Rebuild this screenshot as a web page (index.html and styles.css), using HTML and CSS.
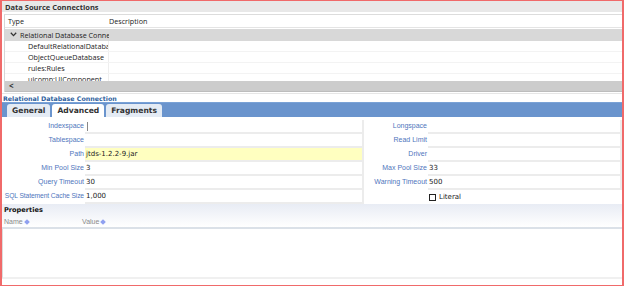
FILE: index.html
```html
<!DOCTYPE html>
<html>
<head>
<meta charset="utf-8">
<link rel="stylesheet" href="styles.css">
</head>
<body>
<div class="frame">
  <div class="dsc-title">Data Source Connections</div>
  <div class="tree">
    <div class="tree-viewport">
      <div class="tree-row tree-head"><span class="c-type">Type</span><span class="c-desc">Description</span></div>
      <div class="tree-row tree-group"><span class="c-type"><svg class="chev" width="7" height="5" viewBox="0 0 7 5"><path d="M0.8 0.8 L3.5 3.6 L6.2 0.8" fill="none" stroke="#333" stroke-width="1.3"/></svg>Relational Database Conne</span><span class="c-desc"></span></div>
      <div class="tree-row"><span class="c-type child">DefaultRelationalDataba</span><span class="c-desc"></span></div>
      <div class="tree-row"><span class="c-type child">ObjectQueueDatabase</span><span class="c-desc"></span></div>
      <div class="tree-row"><span class="c-type child">rules:Rules</span><span class="c-desc"></span></div>
      <div class="tree-row cut"><span class="c-type child">uicomp:UIComponent</span><span class="c-desc"></span></div>
    </div>
    <div class="hscroll"><span class="arrow">&lt;</span></div>
  </div>
  <div class="section-title">Relational Database Connection</div>
  <div class="tabbar">
    <div class="tab">General</div>
    <div class="tab active">Advanced</div>
    <div class="tab">Fragments</div>
  </div>
  <div class="form">
    <label class="lbl">Indexspace</label><div class="inp caret"></div>
    <label class="lbl">Longspace</label><div class="inp"></div>
    <label class="lbl">Tablespace</label><div class="inp"></div>
    <label class="lbl">Read Limit</label><div class="inp"></div>
    <label class="lbl">Path</label><div class="inp yellow">jtds-1.2.2-9.jar</div>
    <label class="lbl">Driver</label><div class="inp"></div>
    <label class="lbl">Min Pool Size</label><div class="inp">3</div>
    <label class="lbl">Max Pool Size</label><div class="inp">33</div>
    <label class="lbl">Query Timeout</label><div class="inp">30</div>
    <label class="lbl">Warning Timeout</label><div class="inp">500</div>
    <label class="lbl sql">SQL Statement Cache Size</label><div class="inp">1,000</div>
    <label class="lbl"></label><div class="inp chk"><span class="box"></span>Literal</div>
  </div>
  <div class="props">
    <div class="props-head">
      <div class="props-title">Properties</div>
      <div class="props-cols">
        <span class="pcol pname">Name <span class="sort"></span></span>
        <span class="pcol">Value <span class="sort"></span></span>
      </div>
    </div>
    <div class="props-body"></div>
  </div>
</div>
</body>
</html>
```
FILE: styles.css
```css
* { box-sizing: border-box; }
html, body { margin: 0; padding: 0; background: #fff; }
.frame {
  width: 624px;
  height: 286px;
  border: 1px solid #f06a6a;
  border-left-width: 2px;
  border-right-width: 2px;
  display: flex;
  flex-direction: column;
  overflow: hidden;
  font-family: "Open Sans", "Noto Sans", sans-serif;
  color: #222;
}
.dsc-title {
  height: 12px;
  background: #e8e8e8;
  font-weight: 700;
  font-size: 7.5px;
  line-height: 12px;
  padding-left: 3px;
  color: #333;
  border-bottom: 1px solid #fff;
  flex: none;
}
.tree {
  margin-top: 1px;
  border-top: 1px solid #dcdcdc;
  margin-left: 2px;
  border-left: 1px solid #d6d6d6;
  flex: none;
}
.tree-viewport { height: 66px; overflow: hidden; }
.tree-row {
  display: flex;
  height: 11px;
  font-size: 7.2px;
  line-height: 11px;
  border-bottom: 1px solid #f3f3f3;
}
.tree-head { height: 13px; line-height: 13px; border-bottom: 1px solid #e4e4e4; }
.tree-group { height: 12px; line-height: 12px; background: #d8d8d8; border-bottom: none; margin-top: 1px; }
.c-type { width: 104px; padding-left: 3px; white-space: nowrap; overflow: hidden; border-right: 1px solid #eee; flex: none; }
.tree-head .c-type, .tree-group .c-type { border-right: none; }
.c-desc { flex: 1; padding-left: 0; }
.child { padding-left: 23px; }
.chev { margin: 0 3px 0 2px; vertical-align: 1px; }
.hscroll {
  height: 11px;
  background: #cccccc;
  border-bottom: 1px solid #bdbdbd;
  font-size: 8px;
  line-height: 10px;
  padding-left: 4px;
  font-weight: 700;
  color: #333;
}
.section-title {
  margin-top: 1px;
  border-top: 1px solid #e6e6e6;
  height: 9px;
  font-family: "DejaVu Sans", sans-serif;
  font-size: 6.3px;
  font-weight: 700;
  color: #2f5f9e;
  line-height: 9px;
  padding-left: 1px;
  flex: none;
}
.tabbar {
  height: 15px;
  background: #6a94cd;
  display: flex;
  align-items: flex-end;
  gap: 2px;
  padding-left: 5px;
  border-top: 1px solid #7aa2d6;
  flex: none;
}
.tab {
  height: 13px;
  padding: 0 5px;
  background: #e4ebf4;
  border-radius: 3px 3px 0 0;
  font-family: "DejaVu Sans", sans-serif;
  font-size: 7.6px;
  font-weight: 700;
  line-height: 13px;
  color: #333;
}
.tab.active { background: #fff; }
.form {
  display: grid;
  grid-template-columns: 82px 279px 62px 1fr;
  column-gap: 1px;
  grid-auto-rows: 14px;
  padding-top: 3px;
  background: #fff;
  flex: none;
  font-family: "Liberation Sans", "DejaVu Sans", sans-serif;
  font-size: 7px;
}
.lbl {
  text-align: right;
  color: #4f76bd;
  line-height: 12px;
  white-space: nowrap;
}
.lbl.sql { font-size: 6.7px; letter-spacing: -0.1px; }
.inp {
  background: #fff;
  border-bottom: 2px solid #ececec;
  border-right: 2px solid #ececec;
  line-height: 12px;
  padding-left: 1px;
  color: #222;
  font-family: "DejaVu Sans", sans-serif;
  font-size: 7px;
}
.inp.caret { background: linear-gradient(#888, #888) 2px 2px / 1px 9px no-repeat #fff; }
.inp.yellow { background: #ffffc0; }
.inp.chk { display: flex; align-items: center; gap: 3px; border: none; }
.box { width: 7px; height: 7px; border: 1.5px solid #222; background: #fff; }
.props {
  flex: 1;
  display: flex;
  flex-direction: column;
  margin-top: 0;
}
.props-head {
  height: 25px;
  background: linear-gradient(#e8ecf4, #fff);
  border-bottom: 2px solid #dbe1e8;
  padding-top: 1px;
}
.props-title {
  font-family: "DejaVu Sans", sans-serif;
  font-size: 6.6px;
  font-weight: 700;
  color: #111;
  padding-left: 2px;
  line-height: 11px;
}
.props-cols { display: flex; font-family: "Liberation Sans", sans-serif; font-size: 7px; color: #8a8a8a; line-height: 11px; }
.pcol { padding-left: 2px; display: flex; align-items: center; gap: 2px; }
.pname { width: 78px; }
.sort { width: 4px; height: 4px; background: #8fa0f0; transform: rotate(45deg); display: inline-block; }
.props-body {
  height: 50px;
  border-left: 1px solid #dcdcdc;
  border-bottom: 2px solid #f0f0f0;
  flex: none;
}
```
